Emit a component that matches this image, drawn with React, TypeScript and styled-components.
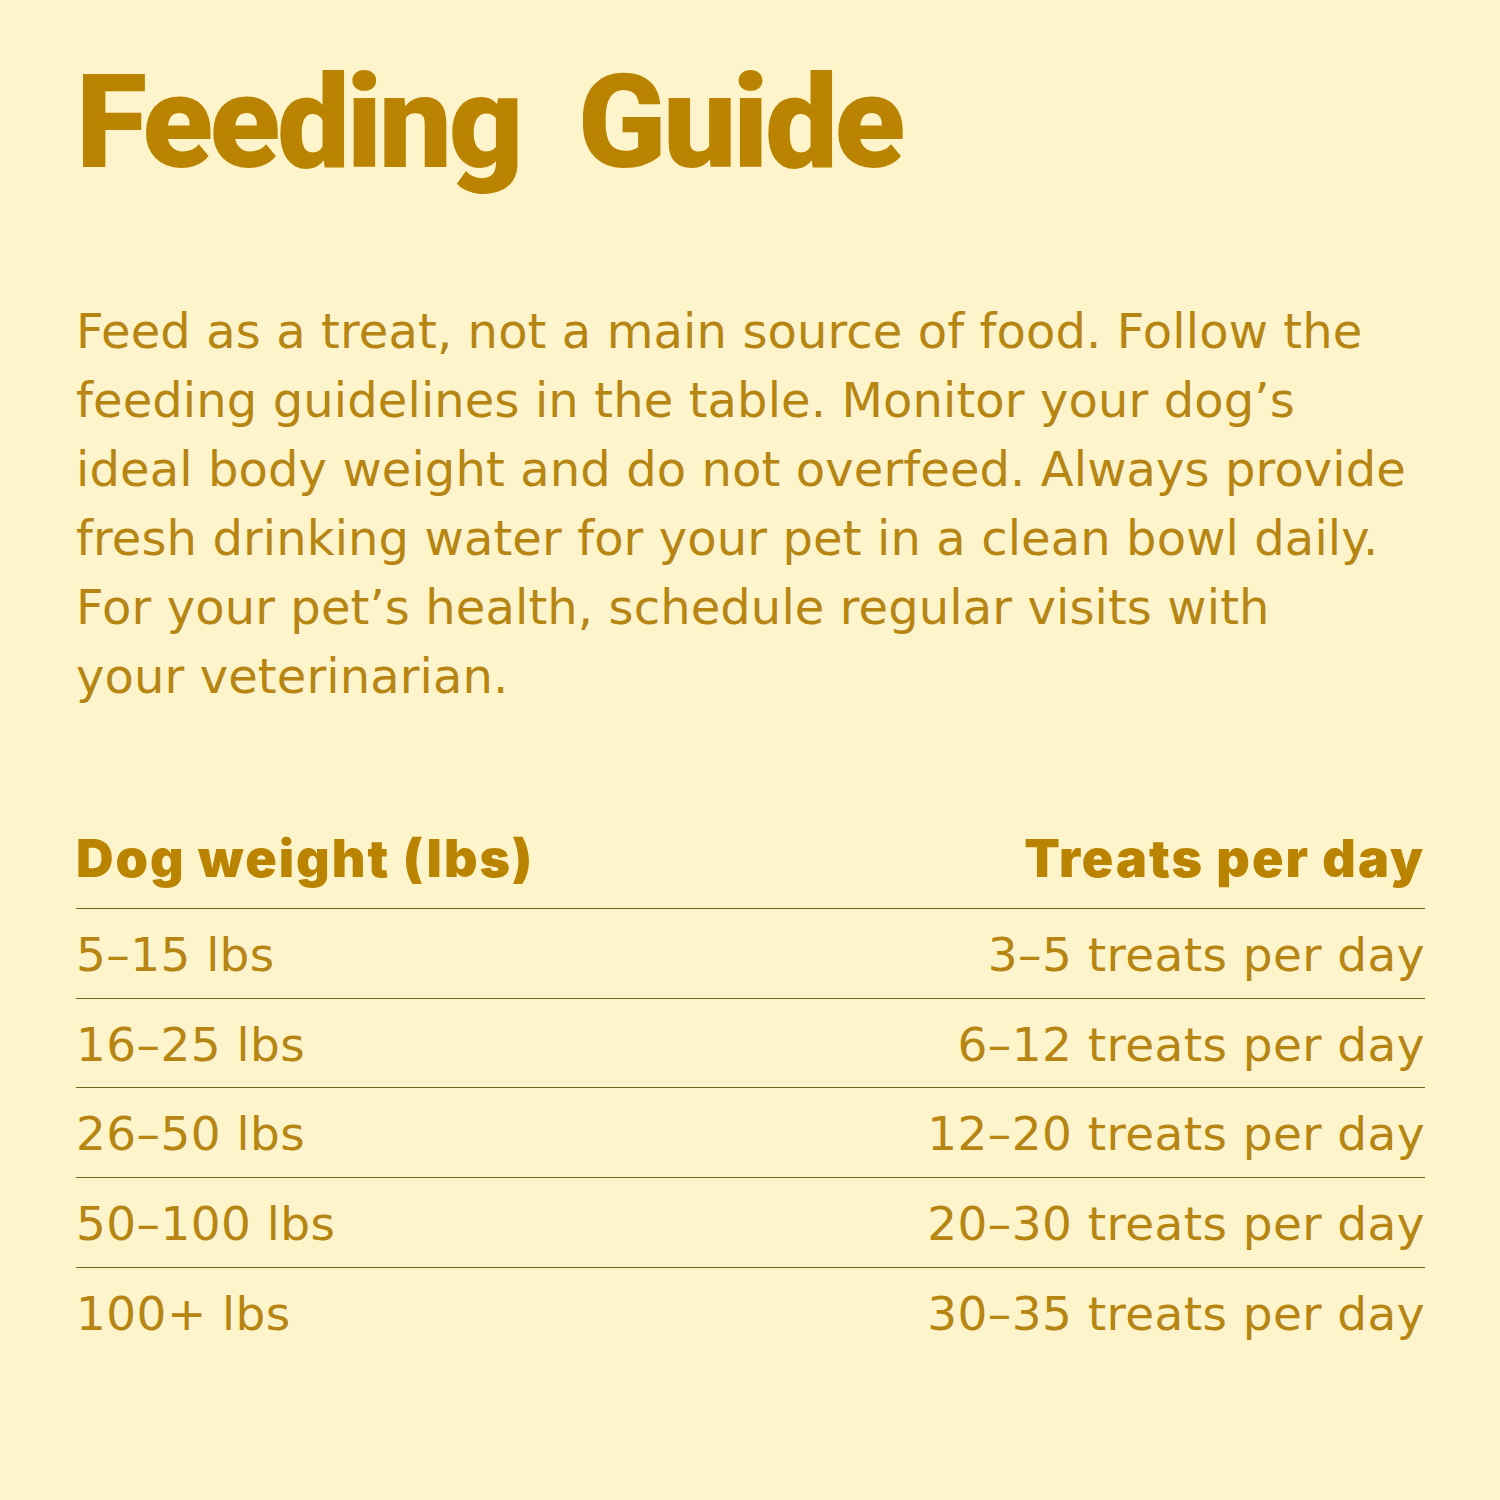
import React from "react";
import styled, { createGlobalStyle } from "styled-components";

const Global = createGlobalStyle`
  html, body { margin: 0; padding: 0; background: #fef4cb; }
  body { font-family: "DejaVu Sans", Inter, sans-serif; }
`;

const Page = styled.main`
  width: 1500px;
  height: 1500px;
  box-sizing: border-box;
  background: #fef4cb;
  padding: 58px 75px 0 76px;
  display: flex;
  flex-direction: column;
  color: #b8860f;
`;

const Title = styled.h1`
  margin: 0;
  font-family: Roboto, "Liberation Sans", sans-serif;
  font-weight: 900;
  font-size: 130px;
  line-height: 130px;
  letter-spacing: -3.5px;
  color: #ba8300;
  white-space: pre;
`;

const Intro = styled.p`
  margin: 109px 0 0;
  font-family: "DejaVu Sans", Inter, sans-serif;
  font-size: 48px;
  line-height: 69px;
  font-weight: 400;
  letter-spacing: 0.1px;
  color: #b68512;
`;

const Line = styled.span`
  display: block;
  white-space: nowrap;
`;

const Table = styled.div`
  margin-top: 108px;
  display: flex;
  flex-direction: column;
`;

const Row = styled.div<{ $head?: boolean; $last?: boolean }>`
  display: flex;
  justify-content: space-between;
  align-items: flex-start;
  height: 89.8px;
  padding-top: ${(p) => (p.$head ? "5px" : "11px")};
  box-sizing: border-box;
  border-bottom: 1.5px solid ${(p) => (p.$last ? "transparent" : "#6f6618")};
`;

const Cell = styled.span<{ $head?: boolean }>`
  font-family: ${(p) => (p.$head ? "Inter, Roboto, sans-serif" : "\"DejaVu Sans\", Inter, sans-serif")};
  font-size: ${(p) => (p.$head ? "52px" : "47px")};
  font-weight: ${(p) => (p.$head ? 900 : 400)};
  letter-spacing: ${(p) => (p.$head ? "2px" : "0.4px")};
  line-height: 70px;
  color: ${(p) => (p.$head ? "#ba8300" : "#b68512")};
  white-space: nowrap;
`;

const lines = [
  "Feed as a treat, not a main source of food. Follow the",
  "feeding guidelines in the table. Monitor your dog\u2019s",
  "ideal body weight and do not overfeed. Always provide",
  "fresh drinking water for your pet in a clean bowl daily.",
  "For your pet\u2019s health, schedule regular visits with",
  "your veterinarian.",
];

const rows: [string, string][] = [
  ["5\u201315 lbs", "3\u20135 treats per day"],
  ["16\u201325 lbs", "6\u201312 treats per day"],
  ["26\u201350 lbs", "12\u201320 treats per day"],
  ["50\u2013100 lbs", "20\u201330 treats per day"],
  ["100+ lbs", "30\u201335 treats per day"],
];

export default function App() {
  return (
    <>
      <Global />
      <Page>
        <Title>{"Feeding  Guide"}</Title>
        <Intro>
          {lines.map((l) => (
            <Line key={l}>{l}</Line>
          ))}
        </Intro>
        <Table>
          <Row $head>
            <Cell $head>Dog weight (lbs)</Cell>
            <Cell $head>Treats per day</Cell>
          </Row>
          {rows.map(([a, b], i) => (
            <Row key={a} $last={i === rows.length - 1}>
              <Cell>{a}</Cell>
              <Cell>{b}</Cell>
            </Row>
          ))}
        </Table>
      </Page>
    </>
  );
}
